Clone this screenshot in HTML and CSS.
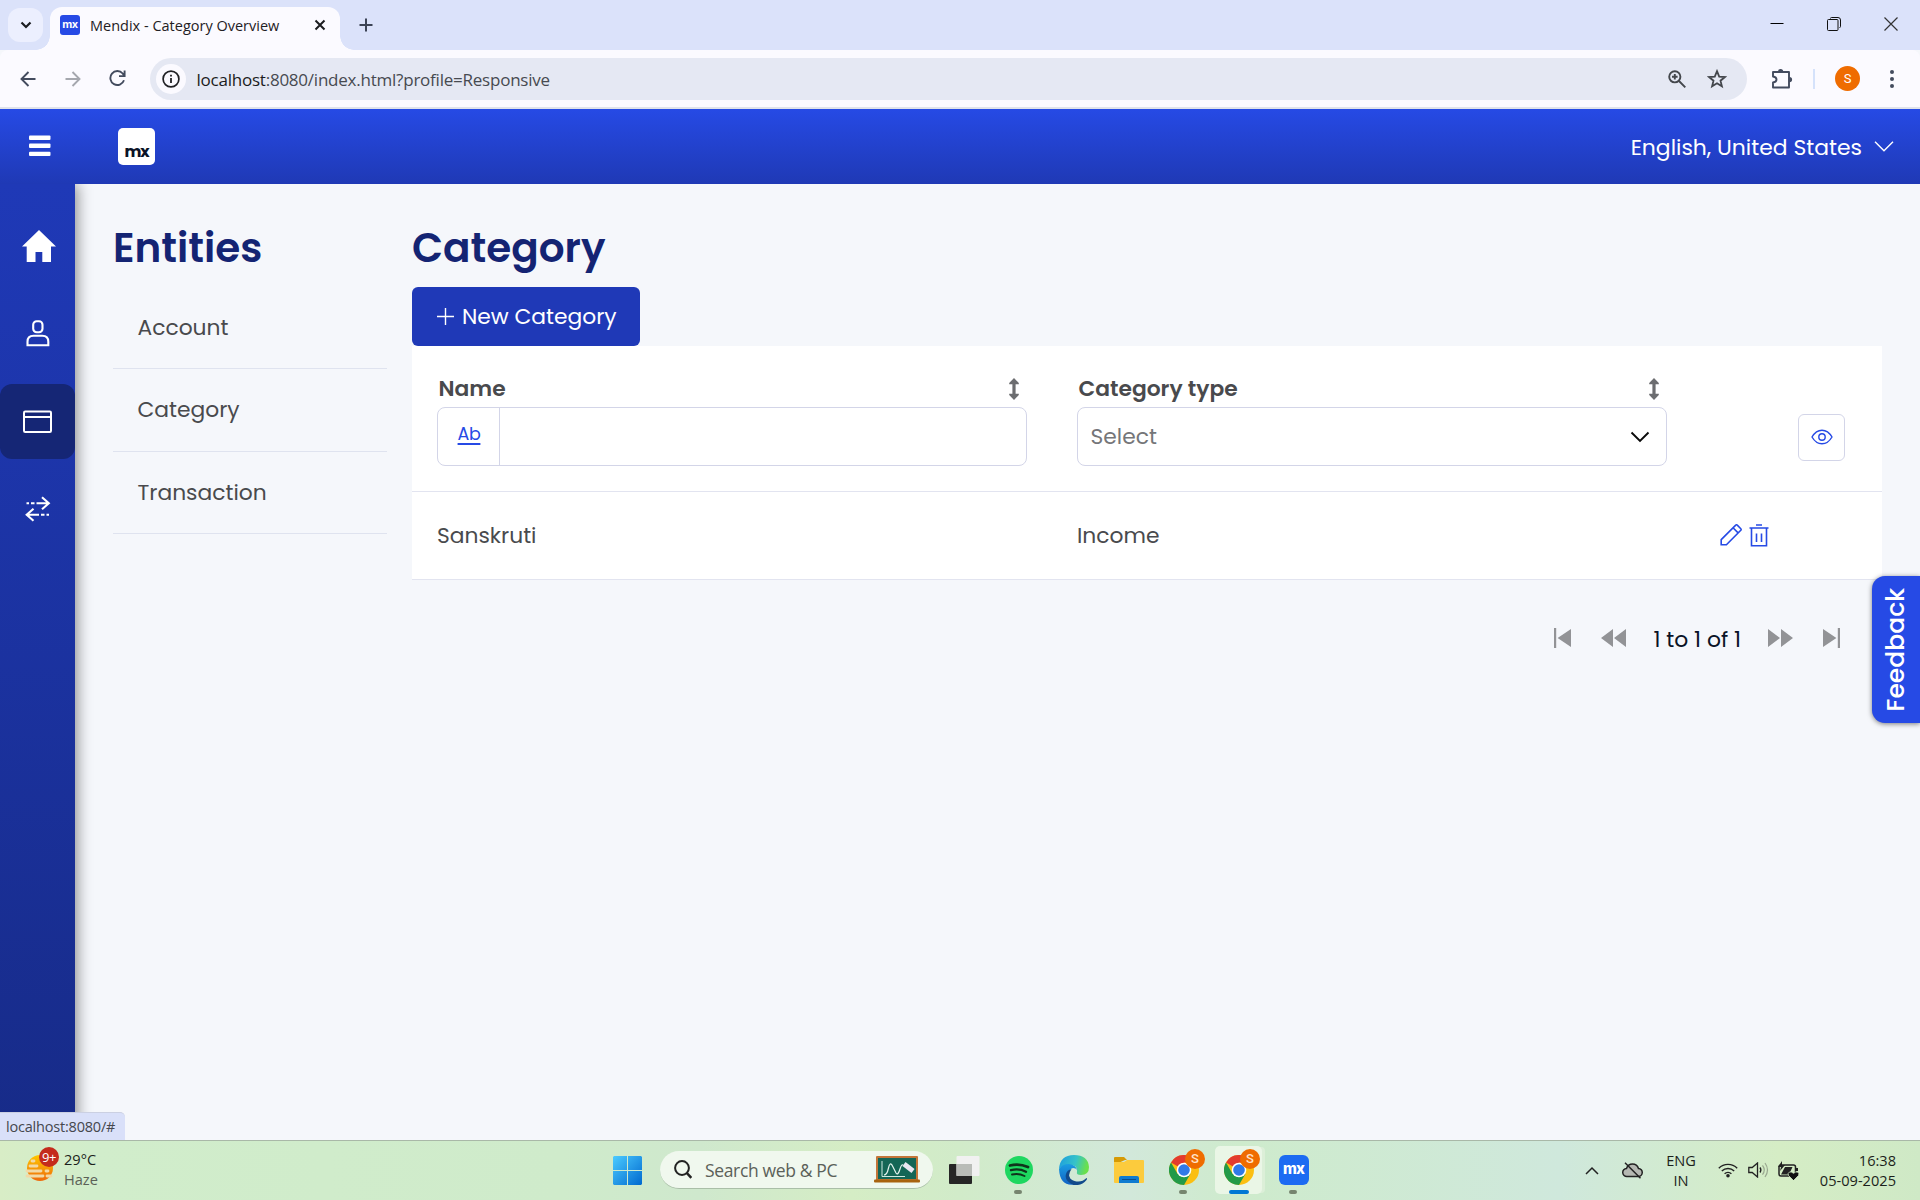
FILE: index.html
```html
<!DOCTYPE html>
<html lang="en">
<head>
<meta charset="utf-8">
<title>Mendix - Category Overview</title>
<link rel="stylesheet" href="styles.css">
</head>
<body>
<div class="tabstrip">
  <div class="tab-search"><svg width="12" height="8" viewBox="0 0 12 8"><path d="M1.5 1.5 6 6l4.500-4.500" fill="none" stroke="#1b1c20" stroke-width="2.200"/></svg></div>
  <div class="tab">
    <div class="favicon">mx</div>
    <span class="tab-title">Mendix - Category Overview</span>
    <svg class="tab-close" width="12" height="12" viewBox="0 0 12 12"><path d="M1.500 1.500l9 9M10.500 1.500l-9 9" stroke="#1b1c20" stroke-width="2"/></svg>
  </div>
  <svg class="tab-new" width="14" height="14" viewBox="0 0 14 14"><path d="M7 .5v13M.5 7h13" stroke="#3c4355" stroke-width="2"/></svg>
  <div class="window-controls">
    <svg width="14" height="14" viewBox="0 0 14 14"><path d="M.5 6.500h13" stroke="#000"/></svg>
    <svg width="14" height="14" viewBox="0 0 14 14"><path d="M3.500 1.500q0-1 1-1h6.500q2.500 0 2.500 2.500v6.500q0 1-1 1" fill="none" stroke="#111"/><rect x=".5" y="2.500" width="10.500" height="11" rx="1" fill="none" stroke="#111"/></svg>
    <svg width="14" height="14" viewBox="0 0 14 14"><path d="M.5.5l13 13M13.500.5l-13 13" stroke="#333" stroke-width="1.200"/></svg>
  </div>
</div>
<div class="toolbar">
  <svg width="16" height="16" viewBox="0 0 16 16"><path d="M15.500 8H1.500M8.500 1 1.500 8l7 7" fill="none" stroke="#434b5e" stroke-width="1.900"/></svg>
  <svg class="nav-forward" width="16" height="16" viewBox="0 0 16 16"><path d="M.5 8h14M7.500 1l7 7-7 7" fill="none" stroke="#a5a7ae" stroke-width="1.900"/></svg>
  <svg class="nav-reload" width="17" height="17" viewBox="0 0 17 17"><path d="M15 10.300A7 7 0 1 1 13.700 3.500L15.500 5.500M15.600.5v5.600H10" fill="none" stroke="#434b5e" stroke-width="1.900"/></svg>
  <div class="omnibox">
    <div class="site-info"><svg width="18" height="18" viewBox="0 0 18 18"><circle cx="9" cy="9" r="7.900" fill="none" stroke="#202124" stroke-width="1.700"/><path d="M9 8v5M9 4.800v1.800" stroke="#202124" stroke-width="1.800"/></svg></div>
    <span class="url"><span class="url-host">localhost</span>:8080/index.html?profile=Responsive</span>
    <svg class="zoom-icon" width="18" height="18" viewBox="0 0 18 18"><circle cx="6.800" cy="6.800" r="5.600" fill="none" stroke="#44474c" stroke-width="1.900"/><path d="M11 11l6.300 6.300M6.800 4v5.600M4 6.800h5.600" stroke="#44474c" stroke-width="1.900"/></svg>
    <svg width="20" height="20" viewBox="0 0 20 20"><path d="M10 2.200l2.200 5.400 5.700.4-4.400 3.700 1.400 5.600L10 14.200l-4.900 3.100 1.400-5.600L2.100 8l5.700-.4z" fill="none" stroke="#44474c" stroke-width="1.800"/></svg>
  </div>
  <svg class="extensions" width="22" height="22" viewBox="0 0 22 22"><path d="M3 4h15v15.500H2v-5q3.500-.5 3.500-3T2 8.500V4z" fill="none" stroke="#434b5e" stroke-width="1.900" stroke-linejoin="round"/><path d="M7 3.500a2.600 2.600 0 0 1 5.200 0zM18.500 9a2.600 2.600 0 0 1 0 5.200z" fill="#434b5e"/></svg>
  <div class="toolbar-divider"></div>
  <div class="avatar">S</div>
  <svg class="menu-dots" width="4" height="20" viewBox="0 0 4 20"><g fill="#434b5e"><circle cx="2" cy="3" r="2"/><circle cx="2" cy="10" r="2"/><circle cx="2" cy="17" r="2"/></g></svg>
</div>

<header class="app-header">
  <svg class="burger" width="22" height="22" viewBox="0 0 22 22"><g fill="#fff"><rect x="0" y=".5" width="21.500" height="4.400" rx="1"/><rect x="0" y="8.600" width="21.500" height="4.400" rx="1"/><rect x="0" y="16.700" width="21.500" height="4.400" rx="1"/></g></svg>
  <div class="app-logo">mx</div>
  <span class="language">English, United States</span>
  <svg width="20" height="11" viewBox="0 0 20 11"><path d="M1 .8l9 9 9-9" fill="none" stroke="#fff" stroke-width="1.400"/></svg>
</header>

<div class="app-body">
  <nav class="sidebar">
    <a class="side-item"><svg class="home" width="34" height="33" viewBox="0 0 34 33"><path d="M17 0l17 16.600h-5V32h-8.700V22h-6.800v10H4.700V16.600H0z" fill="#fff"/></svg></a>
    <a class="side-item"><svg width="24" height="27" viewBox="0 0 24 27"><g fill="none" stroke="#fff" stroke-width="2.100"><rect x="7.200" y="1.300" width="9.300" height="11" rx="3.500"/><path d="M1.500 25.300v-3.500q0-6 6-6h8.800q6 0 6 6v3.500z"/></g></svg></a>
    <a class="side-item active"><svg width="29" height="23" viewBox="0 0 29 23"><g fill="none" stroke="#fff" stroke-width="2"><rect x="1" y="1.500" width="27" height="20.500" rx="1.200"/><path d="M1 7h27"/></g></svg></a>
    <a class="side-item"><svg width="26" height="26" viewBox="0 0 26 26"><g fill="none" stroke="#fff" stroke-width="2.100"><path d="M1.500 7.200h2.500M6 7.200h3.500M11.500 7.200H24M17 1.200l6.800 6-6.800 6M24 18.800h-2.500M19.500 18.800H16M14 18.800H2M8.500 12.800l-6.800 6 6.800 6"/></g></svg></a>
  </nav>
  <aside class="entities">
    <h1>Entities</h1>
    <ul>
      <li>Account</li>
      <li>Category</li>
      <li>Transaction</li>
    </ul>
  </aside>
  <main class="content">
    <h1>Category</h1>
    <button class="new-button"><svg width="17" height="17" viewBox="0 0 17 17"><path d="M8.500 0v17M0 8.500h17" stroke="#fff" stroke-width="1.400"/></svg><span>New Category</span></button>
    <div class="grid">
      <div class="grid-row grid-head">
        <div class="cell">
          <div class="col-title"><span>Name</span><svg width="10" height="22" viewBox="0 0 10 22"><path d="M5 0l4.800 5v1.300H6.600v9.400h3.200V17L5 22 .2 17v-1.300h3.200V6.300H.2V5z" fill="#6c6d70"/></svg></div>
          <div class="filter"><span class="ab"><span>Ab</span></span></div>
        </div>
        <div class="cell">
          <div class="col-title"><span>Category type</span><svg width="10" height="22" viewBox="0 0 10 22"><path d="M5 0l4.800 5v1.300H6.600v9.400h3.200V17L5 22 .2 17v-1.300h3.200V6.300H.2V5z" fill="#6c6d70"/></svg></div>
          <div class="filter select"><span>Select</span><svg width="20" height="12" viewBox="0 0 20 12"><path d="M1.500 1.500l8.500 8.500 8.500-8.500" fill="none" stroke="#0a0a0a" stroke-width="1.900"/></svg></div>
        </div>
        <div class="eye-button"><svg width="22" height="16" viewBox="0 0 22 16"><g fill="none" stroke="#264ae5" stroke-width="1.400"><path d="M1 8q4-6.800 10-6.800T21 8q-4 6.800-10 6.800T1 8z"/><circle cx="11" cy="8" r="3.200"/></g></svg></div>
      </div>
      <div class="grid-row grid-data">
        <div class="cell">Sanskruti</div>
        <div class="cell">Income</div>
        <div class="row-actions">
          <svg width="22" height="22" viewBox="0 0 22 22"><path d="M1.200 20.800v-5.200L15.700 1.100q.8-.6 1.600 0l3.500 3.600q.7.800 0 1.600L6.400 20.800zM13 3.800l5.100 5.100" fill="none" stroke="#264ae5" stroke-width="1.600"/></svg>
          <svg width="20" height="23" viewBox="0 0 20 23"><g fill="none" stroke="#264ae5" stroke-width="1.600"><path d="M.5 4h19M7 1h6M2.500 4v17.700h15V4M7.500 9.500v8.500M12.500 9.500v8.500"/></g></svg>
        </div>
      </div>
    </div>
    <div class="pager">
      <svg width="17" height="20" viewBox="0 0 17 20"><path d="M0 0h2.200v20H0zM17 1v18L3.600 10z" fill="#929396"/></svg>
      <svg width="25" height="20" viewBox="0 0 25 20"><path d="M12 1v18L0 10zM25 1v18L13 10z" fill="#929396"/></svg>
      <span class="page-text">1 to 1 of 1</span>
      <svg width="25" height="20" viewBox="0 0 25 20"><path d="M0 1v18l12-9zM13 1v18l12-9z" fill="#929396"/></svg>
      <svg width="17" height="20" viewBox="0 0 17 20"><path d="M14.800 0H17v20h-2.200zM0 1v18l13.400-9z" fill="#929396"/></svg>
    </div>
  </main>
  <div class="feedback"><span>Feedback</span></div>
  <div class="status"><span>localhost:8080/#</span></div>
</div>

<footer class="taskbar">
  <div class="weather">
    <svg width="32" height="36" viewBox="0 0 32 36"><defs><linearGradient id="sun" x1="0" y1="0" x2="0" y2="1"><stop offset="0" stop-color="#ffc800"/><stop offset="1" stop-color="#ee6a0c"/></linearGradient></defs><circle cx="15" cy="22" r="13" fill="url(#sun)"/><g stroke="#f2d9a6" stroke-width="2.800" stroke-linecap="round"><path d="M7 15h2M5 20h7M2 25h14M21 25h2M2 30h16M22 30h4"/></g></svg>
    <span class="notif">9+</span>
    <div class="weather-text"><span>29°C</span><span class="haze">Haze</span></div>
  </div>
  <div class="task-center">
    <svg width="29" height="29" viewBox="0 0 29 29"><defs><linearGradient id="win" x1="0" y1="0" x2="1" y2="1"><stop offset="0" stop-color="#4ccbff"/><stop offset="1" stop-color="#0069cf"/></linearGradient></defs><path d="M1 0h13v14H0V1zM15 0h13l1 1v13H15zM0 15h14v14H1l-1-1zM15 15h14v13l-1 1H15z" fill="url(#win)"/></svg>
    <div class="search">
      <svg width="18" height="19" viewBox="0 0 18 19"><circle cx="8" cy="8" r="6.900" fill="none" stroke="#222" stroke-width="2"/><path d="M12.800 13l4.500 5" stroke="#222" stroke-width="2.600"/></svg>
      <span class="search-text">Search web &amp; PC</span>
      <svg width="46" height="27" viewBox="0 0 46 27"><rect x="2" y="0" width="42" height="25" rx="1" fill="#c4763a"/><rect x="4" y="2" width="38" height="21" fill="#146656"/><path d="M8 5v15.500h23" fill="none" stroke="#cfe8df"/><path d="M10 19Q13 19 14.500 12t4-2 3.500 7q2 3 4-4 1.500-5 3-4" fill="none" stroke="#e4f3ee" stroke-width="1.200"/><path d="M30 8l9 7" stroke="#e9e6f2" stroke-width="5"/><rect y="23.500" width="46" height="3" rx="1" fill="#a8630f"/></svg>
    </div>
    <svg width="31" height="29" viewBox="0 0 31 29"><rect y="8" width="23" height="20" rx="1" fill="#262626"/><rect x="7.500" y="0" width="23" height="20" rx="1" fill="#f1f1f1"/><path d="M7.500 8H23v12H7.500z" fill="#b9bcb8"/></svg>
    <div class="app spotify"><svg width="30" height="30" viewBox="0 0 30 30"><circle cx="15" cy="15" r="14" fill="#1ed760"/><g fill="none" stroke="#10331c" stroke-linecap="round"><path d="M6 10.500q9-2.500 18 1.500" stroke-width="2.800"/><path d="M7 15.200q8-2 15 1.500" stroke-width="2.300"/><path d="M8 19.500q7-1.500 12.500 1.500" stroke-width="1.900"/></g></svg><i></i></div>
    <div class="app"><svg width="30" height="30" viewBox="0 0 30 30"><defs><linearGradient id="e1" x1="0" y1="0" x2="1" y2=".2"><stop offset="0" stop-color="#1c9ce0"/><stop offset=".6" stop-color="#36c3c8"/><stop offset="1" stop-color="#6ae04c"/></linearGradient><linearGradient id="e2" x1="0" y1="0" x2="0" y2="1"><stop offset="0" stop-color="#1b9de2"/><stop offset="1" stop-color="#1062c4"/></linearGradient></defs><path d="M0 14Q1 0 15 0t15 12q0 8-8 8-5 0-4-3 1-7-7-7Q3 10 0 14z" fill="url(#e1)"/><path d="M0 14q3-5 10-5 7 1 8 6-1-2-4-2-5 1-4 8 2 7 8 8-17 4-18-15z" fill="url(#e2)"/><path d="M12.500 14q-6 9 3 12 7 2 12-3 1 0 0 2-5 6-13 5Q5 26 7 19q1-4 5.500-5z" fill="#114a8b"/></svg></div>
    <div class="app"><svg width="30" height="30" viewBox="0 0 30 30"><path d="M0 3q0-1 1-1h9l3 3h-2L0 10z" fill="#d69a05"/><path d="M0 7h10l3-2h16q1 0 1 1v21q0 1-1 1H1q-1 0-1-1z" fill="#fccb3d"/><path d="M5 28v-5q0-2 2-2h16q2 0 2 2v5z" fill="#0f7bd0"/><path d="M8 24.500h14" stroke="#0a4d8c"/></svg></div>
    <div class="app"><svg width="30" height="30" viewBox="0 0 30 30"><circle cx="15" cy="15" r="15" fill="#fbbf12"/><path d="M15 15 2 7.500A15 15 0 0 1 28 7.500H15z" fill="#e33b2e"/><path d="M2 7.500A15 15 0 0 0 15 30l6.500-11.300L8.500 18.700z" fill="#229a48"/><circle cx="15" cy="15" r="7.300" fill="#fff"/><circle cx="15" cy="15" r="5.800" fill="#3079e8"/></svg><b>S</b><i></i></div>
    <div class="app current"><svg width="30" height="30" viewBox="0 0 30 30"><circle cx="15" cy="15" r="15" fill="#fbbf12"/><path d="M15 15 2 7.500A15 15 0 0 1 28 7.500H15z" fill="#e33b2e"/><path d="M2 7.500A15 15 0 0 0 15 30l6.500-11.300L8.500 18.700z" fill="#229a48"/><circle cx="15" cy="15" r="7.300" fill="#fff"/><circle cx="15" cy="15" r="5.800" fill="#3079e8"/></svg><b>S</b><i></i></div>
    <div class="app"><div class="mx-app">mx</div><i></i></div>
  </div>
  <div class="tray">
    <svg width="14" height="9" viewBox="0 0 14 9"><path d="M1 8l6-6 6 6" fill="none" stroke="#222" stroke-width="1.500"/></svg>
    <svg class="cloud" width="21" height="17" viewBox="0 0 21 17"><path d="M5 14.500a4 4 0 0 1-.5-8Q6 2 10.500 2t6 4.500a4 4 0 0 1-.5 8z" fill="#b5b8b2" stroke="#222" stroke-width="1.500"/><path d="M3 .8l15.500 15.500" stroke="#222" stroke-width="1.500"/></svg>
    <div class="lang"><span>ENG</span><span>IN</span></div>
    <svg class="wifi" width="20" height="16" viewBox="0 0 20 16"><g fill="none" stroke="#222" stroke-width="1.400"><path d="M.8 6.200a13 13 0 0 1 18.400 0M3.800 9a9 9 0 0 1 12.400 0M6.600 11.800a5 5 0 0 1 6.800 0"/></g><circle cx="10" cy="13.800" r="1.800" fill="#222"/></svg>
    <svg class="vol" width="21" height="16" viewBox="0 0 21 16"><path d="M.8 5.500h3.400L9.500 1v14l-5.300-4.500H.8z" fill="none" stroke="#222" stroke-width="1.300"/><path d="M12 5.500q1.800 2.500 0 5" fill="none" stroke="#222" stroke-width="1.300"/><path d="M14.500 3.300q3.500 4.700 0 9.400M17 1q5 7 0 14" fill="none" stroke="#9aa890" stroke-width="1.200"/></svg>
    <svg class="battery" width="21" height="19" viewBox="0 0 21 19"><rect x="1" y="4" width="16.500" height="11" rx="2" fill="none" stroke="#222" stroke-width="1.500"/><path d="M3 13.500L7 6h7.500L11 13.500zM4 0L0 6h3l-1 4 5-6H4zM18 7h2v3h-2z" fill="#222"/><path d="M15.500 19.500l-5-5q-1.200-2.200 1-3.500 2-.5 4 1.300 2-1.800 4-1.300 2.200 1.300 1 3.500z" fill="#111" stroke="#d3ebc8" stroke-width=".8"/></svg>
    <div class="clock"><span>16:38</span><span>05-09-2025</span></div>
  </div>
</footer>
</body>
</html>
```
FILE: styles.css
```css
* { box-sizing: border-box; }
body { margin: 0; width: 1920px; height: 1200px; overflow: hidden; display: flex; flex-direction: column; font-family: "Poppins", "Inter", sans-serif; background: #f5f7fb; color: #494a4d; white-space: nowrap; }
svg { display: block; flex: none; }

.tabstrip { height: 50px; flex: none; background: #dbe2fa; display: flex; align-items: flex-start; padding-left: 8px; font-family: "Segoe UI", "Open Sans", sans-serif; }
.tab-search { width: 35px; height: 34px; margin-top: 8px; background: #eceffe; border-radius: 12px; display: flex; align-items: center; justify-content: center; }
.tab { position: relative; margin-left: 7px; margin-top: 7px; width: 290px; height: 43px; background: #fbfaff; border-radius: 12px 12px 0 0; display: flex; align-items: center; padding: 0 14px 7px 10px; }
.tab::before, .tab::after { content: ""; position: absolute; bottom: 0; width: 14px; height: 14px; }
.tab::before { left: -14px; background: radial-gradient(circle at 0 0, transparent 13.500px, #fbfaff 14px); }
.tab::after { right: -14px; background: radial-gradient(circle at 100% 0, transparent 13.500px, #fbfaff 14px); }
.favicon { width: 20px; height: 20px; border-radius: 3px; background: #264ae5; color: #fff; font: 700 11px/18px "Inter", sans-serif; letter-spacing: -.5px; text-align: center; }
.tab-title { margin-left: 10px; font-size: 14.500px; letter-spacing: 0; color: #1f2024; }
.tab-close { margin-left: auto; }
.tab-new { margin: 18px 0 0 19px; }
.window-controls { display: flex; gap: 43px; margin: 17px 22px 0 auto; }

.toolbar { height: 59px; flex: none; background: #fbfaff; border-bottom: 2px solid #dfe2ea; border-radius: 8px 8px 0 0; display: flex; align-items: center; padding-left: 20px; font-family: "Segoe UI", "Open Sans", sans-serif; }
.nav-forward { margin-left: 29px; }
.nav-reload { margin-left: 28px; }
.omnibox { margin-left: 24px; width: 1597px; height: 42px; margin-top: 1px; border-radius: 21px; background: #e5e8f3; display: flex; align-items: center; padding: 0 20px 0 6px; }
.site-info { width: 30px; height: 30px; border-radius: 50%; background: #fbfaff; display: flex; align-items: center; justify-content: center; }
.url { margin-left: 10.500px; font-size: 17px; letter-spacing: -.23px; color: #474a50; }
.url-host { color: #1b1c20; }
.zoom-icon { margin: 0 21px 0 auto; }
.extensions { margin-left: 24px; }
.toolbar-divider { width: 2px; height: 20px; background: #d5e2fb; margin-left: 20px; }
.avatar { width: 25px; height: 25px; margin-left: 20px; border-radius: 50%; background: #ef6c00; color: #fff; font: 13px/25px Roboto, sans-serif; text-align: center; }
.menu-dots { margin-left: 30px; }

.app-header { height: 75px; flex: none; background: linear-gradient(#264ae5, #1f39b5); display: flex; align-items: center; padding: 0 26px 0 29px; color: #fff; }
.burger { margin-bottom: 2px; }
.app-logo { width: 37px; height: 37px; margin-left: 67px; border-radius: 5px; background: #fff; color: #0a1326; font-size: 16px; font-weight: 700; line-height: 47px; letter-spacing: -1.200px; text-align: center; }
.language { font-size: 21.900px; margin: 2px 12px 0 auto; }

.app-body { position: relative; flex: 1; display: flex; min-height: 0; }
.sidebar { width: 75px; flex: none; padding-top: 25px; display: flex; flex-direction: column; gap: 12.500px; background: linear-gradient(#1f39b7, #172b88); box-shadow: 2px 0 14px rgba(0,0,0,.45); clip-path: inset(0 -30px 0 0); }
.side-item { height: 75px; display: flex; align-items: center; justify-content: center; padding-bottom: 1px; }
.home { margin-left: 3px; }
.active { background: #152675; border-radius: 12px; }
h1 { margin: 0; color: #142473; font-size: 40.500px; font-weight: 600; line-height: 52px; }
.entities { width: 274px; margin-left: 38px; padding-top: 38px; }
ul { list-style: none; margin: 13px 0 0; padding: 0; }
li { height: 82.300px; padding: 0 24.500px; border-bottom: 1px solid #dfe3ef; font-size: 21.800px; line-height: 82px; }
.content { width: 1470px; margin-left: 25px; padding-top: 38px; }
.new-button { display: flex; align-items: center; gap: 8px; width: 228px; height: 59px; margin-top: 13px; padding: 0 0 0 25px; border: 0; border-radius: 6px; background: #1f39b7; color: #fff; font: 21.800px "Poppins", "Inter", sans-serif; white-space: nowrap; }
.grid { background: #fff; font-size: 21.800px; }
.grid-row { display: flex; padding-left: 25px; border-bottom: 1px solid #e2e4f0; }
.grid-head { height: 146px; padding-top: 26px; }
.grid-data { height: 88px; align-items: center; }
.cell { width: 590px; margin-right: 50px; }
.col-title { height: 35px; padding: 0 8px 2px 1.500px; display: flex; align-items: center; justify-content: space-between; font-weight: 600; }
.filter { height: 59px; border: 1px solid #d3d5e8; border-radius: 8px; display: flex; align-items: center; }
.ab { width: 62px; height: 100%; border-right: 1px solid #d3d5e8; display: flex; align-items: center; justify-content: center; padding: 0 0 5px 1px; font-size: 17.500px; letter-spacing: -.4px; color: #264ae5; text-decoration: underline; text-decoration-thickness: 2px; text-underline-offset: 3px; }
.select { justify-content: space-between; padding: 0 16px 0 12.500px; color: #757679; }
.eye-button { width: 47px; height: 47px; margin: 42px 0 0 81px; border: 1px solid #d3d5e8; border-radius: 6px; display: flex; align-items: center; justify-content: center; padding-bottom: 1px; }
.row-actions { display: flex; gap: 7px; margin-left: 3px; padding-bottom: 1px; }
.pager { display: flex; align-items: center; justify-content: flex-end; height: 30px; margin-top: 43px; padding-right: 42px; font-size: 21.900px; color: #0a1326; gap: 30px; }
.page-text { margin: 3px -3px 1px; }
.feedback { position: absolute; left: 1872px; top: 392px; width: 48px; height: 147px; border-radius: 13px 0 0 13px; background: #264ae5; box-shadow: 0 1px 5px rgba(0,0,0,.5); color: #fff; display: flex; align-items: center; justify-content: center; }
.feedback span { writing-mode: vertical-rl; transform: rotate(180deg); font-size: 25px; font-weight: 500; }
.status { position: absolute; left: 0; bottom: 0; width: 125px; height: 28px; padding-left: 6px; background: #d9e0f9; border-top: 1px solid #cbd0e2; border-radius: 0 5px 0 0; font: 14.500px/27px "Segoe UI", "Open Sans", sans-serif; letter-spacing: -.2px; color: #45474d; }

.taskbar { height: 60px; flex: none; border-top: 1px solid #a9b8a8; background: linear-gradient(90deg, #d8edc6 0, #d1edcb 90px, #cfebcb 560px, #cfe8cd 700px, #d5edc5 850px, #d1ebc9 960px, #d2e8da 1130px, #ceebcc 1240px, #cfe8dc 1560px, #d5edc5 1780px, #cfe9c6 1920px); display: flex; align-items: flex-start; font-family: "Segoe UI", "Open Sans", sans-serif; font-size: 14.600px; color: #1c1f1b; }
.weather { position: relative; width: 613px; display: flex; padding: 5px 0 0 25px; }
.notif { position: absolute; left: 39px; top: 6px; width: 20px; height: 20px; border-radius: 50%; background: #c42b1c; color: #fff; font-size: 13px; line-height: 20px; text-align: center; letter-spacing: -.5px; }
.weather-text { display: flex; flex-direction: column; margin-left: 7px; padding-top: 3px; line-height: 20px; }
.haze { color: #5b6157; }
.task-center { display: flex; align-items: center; height: 58px; }
.search { display: flex; align-items: center; width: 273px; height: 38px; margin: 0 16px 0 18px; padding: 0 13px 0 14px; border-radius: 19px; background: #f0f8ee; border-bottom: 1px solid #aabfa8; }
.search-text { margin: 0 auto 0 13px; font-size: 17.500px; letter-spacing: -.35px; color: #5b6159; }
.app { position: relative; width: 47px; height: 48px; margin-left: 8px; display: flex; align-items: center; justify-content: center; }
.spotify { margin-left: 15px; }
.app i { position: absolute; bottom: 0; left: 19px; width: 8px; height: 4px; border-radius: 2px; background: #76856f; }
.app b { position: absolute; left: 25px; top: 3px; width: 20px; height: 20px; border-radius: 50%; background: #ef6c00; color: #ffe3ca; font: 500 13px/20px Roboto, sans-serif; text-align: center; }
.current { background: #eaf6e6; border-radius: 5px; box-shadow: 4px 0 0 -1px #dcefd8; }
.app.current i { left: 14px; width: 20px; background: #0078d4; }
.mx-app { width: 30px; height: 30px; border-radius: 6px; background: #1c6bf2; color: #fff; font: 800 15px/27px "Inter", sans-serif; letter-spacing: -.8px; text-align: center; }
.tray { display: flex; align-items: center; height: 58px; margin-left: auto; padding-right: 24px; }
.cloud { margin-left: 23px; }
.lang { display: flex; flex-direction: column; align-items: center; margin-left: 23px; line-height: 20px; }
.wifi { margin-left: 22px; }
.vol { margin-left: 10px; }
.battery { margin-left: 9px; }
.clock { display: flex; flex-direction: column; align-items: flex-end; margin-left: 21px; line-height: 20px; }
```
